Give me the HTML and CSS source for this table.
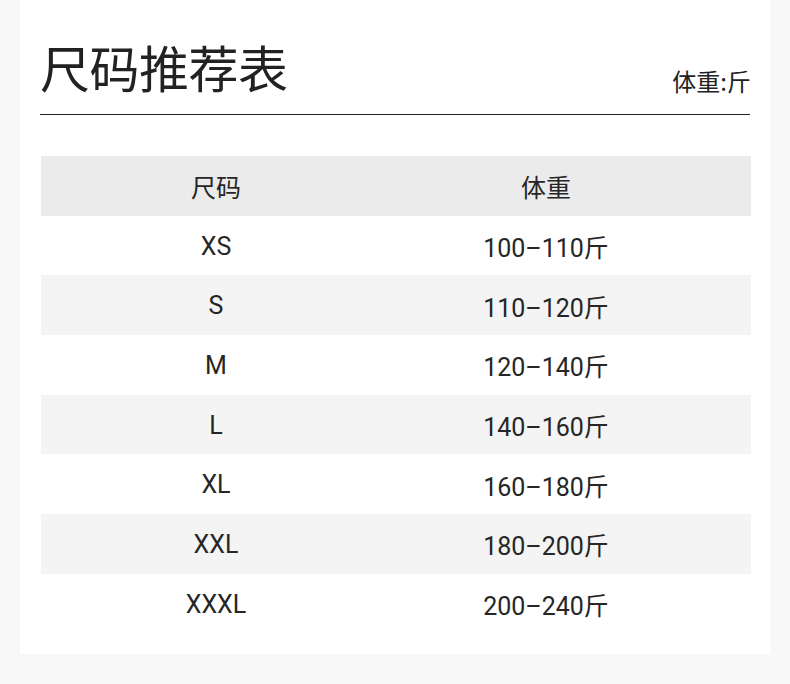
FILE: index.html
```html
<!DOCTYPE html>
<html lang="zh">
<head>
<meta charset="utf-8">
<link rel="stylesheet" href="styles.css">
</head>
<body>
<div class="card">
  <div class="head">
    <h1 class="title">尺码推荐表</h1>
    <span class="unit">体重:斤</span>
  </div>
  <div class="table">
    <div class="row hdr"><span>尺码</span><span>体重</span></div>
    <div class="row"><span>XS</span><span>100–110斤</span></div>
    <div class="row alt"><span>S</span><span>110–120斤</span></div>
    <div class="row"><span>M</span><span>120–140斤</span></div>
    <div class="row alt"><span>L</span><span>140–160斤</span></div>
    <div class="row"><span>XL</span><span>160–180斤</span></div>
    <div class="row alt"><span>XXL</span><span>180–200斤</span></div>
    <div class="row"><span>XXXL</span><span>200–240斤</span></div>
  </div>
</div>
</body>
</html>
```

FILE: styles.css
```css
html, body {
  margin: 0;
  padding: 0;
  background: #f8f8f8;
}
body {
  font-family: Roboto, "Noto Sans CJK SC", sans-serif;
  color: #222;
}
.card {
  margin: 0 20px;
  background: #fff;
  padding: 30px 20px 19px 20px;
  height: 654px;
  box-sizing: border-box;
}
.head {
  display: flex;
  justify-content: space-between;
  align-items: flex-end;
  border-bottom: 1px solid #222;
  padding-bottom: 12px;
}
.title {
  margin: 0;
  font-family: "Noto Sans CJK SC", sans-serif;
  font-weight: 400;
  font-size: 50px;
  line-height: 72px;
  letter-spacing: -0.5px;
}
.unit {
  font-family: "Noto Sans CJK SC", sans-serif;
  font-size: 24px;
  line-height: 30px;
  padding-bottom: 6px;
  margin-right: -1px;
}
.table {
  margin-top: 41px;
  margin-left: 1px;
  margin-right: -1px;
}
.row {
  display: grid;
  grid-template-columns: 350px 310px 1fr;
  height: 59.7px;
  align-items: center;
  font-size: 25px;
  color: #262626;
  padding-top: 1px;
  box-sizing: border-box;
}
.row span {
  text-align: center;
}
.hdr {
  background: #ebebeb;
  font-family: "Noto Sans CJK SC", sans-serif;
}
.alt {
  background: #f4f4f4;
}
```
